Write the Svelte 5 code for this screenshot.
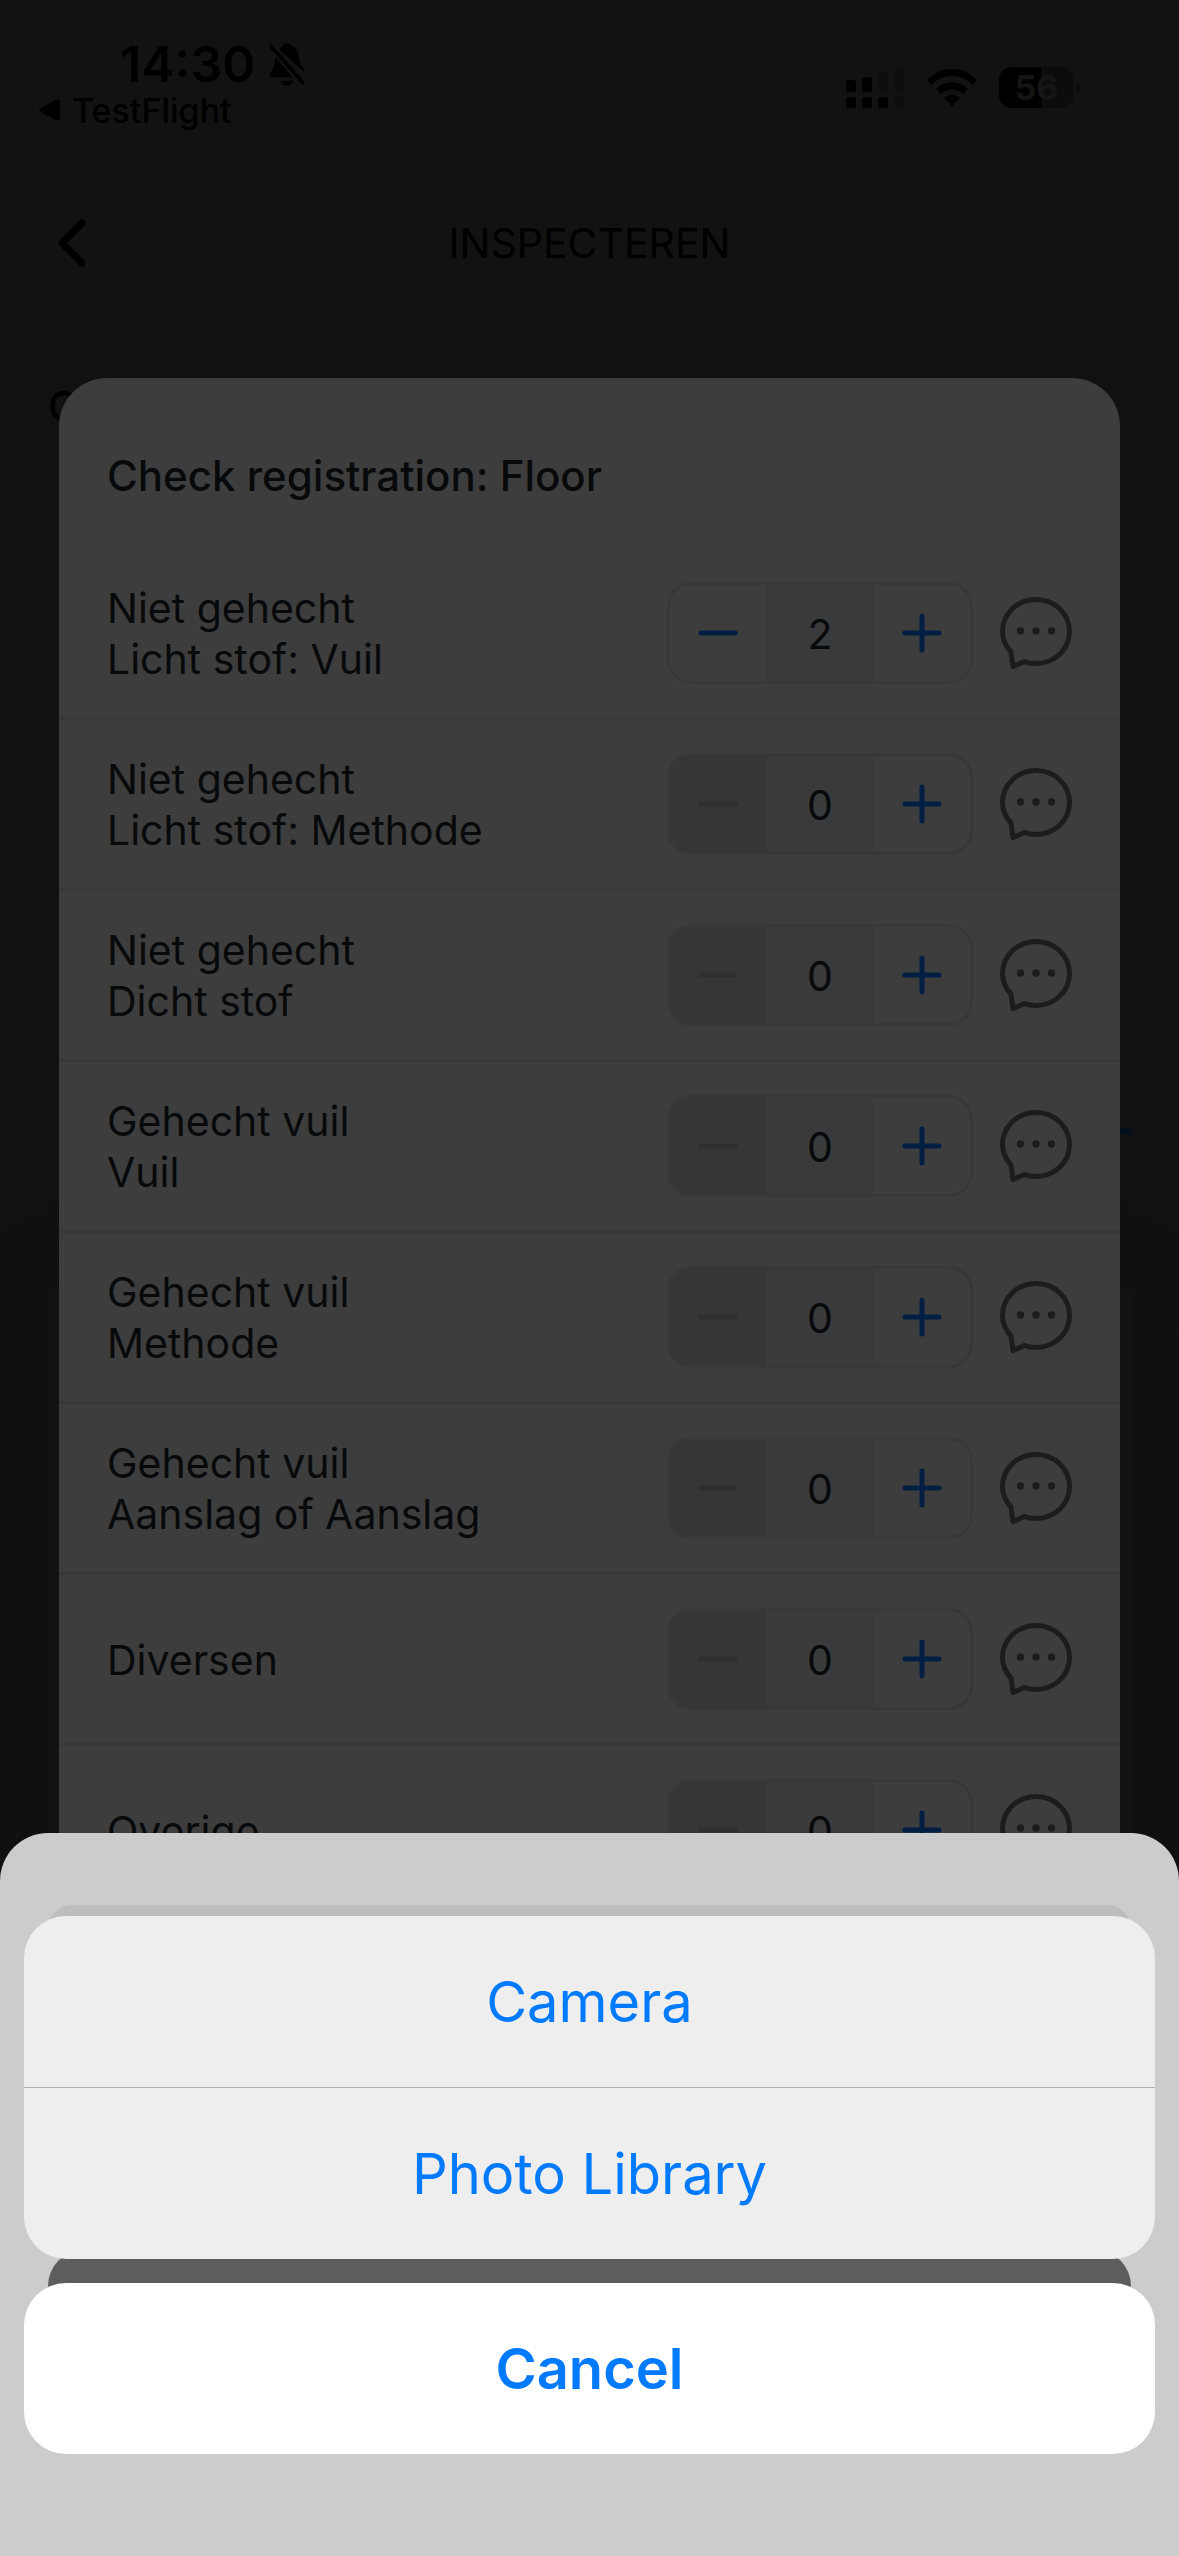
<script lang="ts">
  interface Check {
    lines: string[];
    count: number;
  }

  let checks: Check[] = $state([
    { lines: ['Niet gehecht', 'Licht stof: Vuil'], count: 2 },
    { lines: ['Niet gehecht', 'Licht stof: Methode'], count: 0 },
    { lines: ['Niet gehecht', 'Dicht stof'], count: 0 },
    { lines: ['Gehecht vuil', 'Vuil'], count: 0 },
    { lines: ['Gehecht vuil', 'Methode'], count: 0 },
    { lines: ['Gehecht vuil', 'Aanslag of Aanslag'], count: 0 },
    { lines: ['Diversen'], count: 0 },
    { lines: ['Overige'], count: 0 }
  ]);
</script>

<div class="screen">
  <header>
    <div class="status-bar">
      <div class="status-left">
        <div class="clock">
          <span>14:30</span>
          <svg class="bell" viewBox="0 0 40 50" aria-hidden="true">
            <path d="M11 7c2-2 3-3 4.500-4C17-1 23-1 25 3c7 3 9 9 9.500 18 .5 4 2 5 4 7.500 1 1.500 1.500 3 1.500 5z" />
            <path d="M7 16 26 39H4c-4 0-5-4-2-7 3-3 4-5 4-11z" />
            <path d="M13 43h14c-2 8-12 8-14 0z" />
            <path class="slash" d="M2 4 38 45" />
          </svg>
        </div>
        <a class="back-app" href="#testflight">
          <svg viewBox="0 0 21 22" aria-hidden="true"><path d="M2 9 17 1q4-2 4 2v16q0 4-4 2L2 13q-4-2 0-4z" /></svg>
          TestFlight
        </a>
      </div>
      <div class="status-right">
        <svg class="signal" viewBox="0 0 59 42" aria-hidden="true">
          <rect x="0" y="13" width="10" height="12" rx="3" />
          <rect x="16" y="10" width="10" height="15" rx="3" />
          <rect class="faint" x="32" y="5" width="10" height="20" rx="3" />
          <rect class="faint" x="48" y="0" width="10" height="25" rx="3" />
          <rect x="0" y="30" width="10" height="11" rx="3" />
          <rect x="16" y="30" width="10" height="11" rx="3" />
          <rect x="32" y="30" width="10" height="11" rx="3" />
          <rect class="faint" x="48" y="30" width="10" height="11" rx="3" />
        </svg>
        <svg class="wifi" viewBox="0 0 50 38" aria-hidden="true">
          <path d="M0 11C14-4 36-4 50 11l-4 5C34 4 16 4 4 16z" />
          <path d="M9 20c9-9 23-9 32 0l-5 5c-6-6-16-6-22 0z" />
          <path d="M17 29c5-4 11-4 16 0l-8 9z" />
        </svg>
        <div class="battery">
          <span class="level">56</span>
          <span class="cap"></span>
        </div>
      </div>
    </div>
    <nav>
      <button class="back" aria-label="Terug">
        <svg viewBox="0 0 28 48" aria-hidden="true"><path d="M24 4 4 24l20 20" /></svg>
      </button>
      <h1>INSPECTEREN</h1>
    </nav>
  </header>

  <main>
    <div class="backdrop">
      <span class="page-label">C</span>
      <div class="field"></div>
      <div class="field"></div>
      <div class="tab"></div>
      <div class="list"></div>
    </div>
    <section class="modal">
      <h2>Check registration: Floor</h2>
      {#each checks as check}
        <div class="check">
          <div class="check-name">
            {#each check.lines as line}
              <span>{line}</span>
            {/each}
          </div>
          <div class="stepper">
            <button aria-label="Minder" disabled={check.count === 0} onclick={() => check.count--}>
              <svg viewBox="0 0 40 40" aria-hidden="true"><path d="M3 20h34" /></svg>
            </button>
            <output>{check.count}</output>
            <button aria-label="Meer" onclick={() => check.count++}>
              <svg viewBox="0 0 40 40" aria-hidden="true"><path d="M3 20h34M20 3v34" /></svg>
            </button>
          </div>
          <button class="comment" aria-label="Opmerking">
            <svg viewBox="0 0 72 72" aria-hidden="true">
              <path d="M11 55C5.500 49 2.500 42 2.500 34.500 2.500 17 17 2.500 36 2.500s33.500 14.500 33.500 32S55 66.500 36 66.500c-4 0-8-.5-11.500-2L13 69.500z" />
              <circle cx="20.500" cy="34" r="3.700" />
              <circle cx="36" cy="34" r="3.700" />
              <circle cx="51.500" cy="34" r="3.700" />
            </svg>
          </button>
        </div>
      {/each}
    </section>
  </main>

  <div class="sheet">
    <div class="sheet-field"></div>
    <div class="sheet-submit"></div>
    <div class="actions">
      <div class="group">
        <button>Camera</button>
        <button>Photo Library</button>
      </div>
      <button class="cancel">Cancel</button>
    </div>
  </div>
</div>

<style>
  :global(body) {
    margin: 0;
    background: #111114;
  }

  .screen {
    position: relative;
    display: flex;
    flex-direction: column;
    height: 100vh;
    overflow: hidden;
    background: #111114;
    color: #08090a;
    font-family: Inter, 'Liberation Sans', sans-serif;
    font-size: 41px;
    line-height: 51px;
  }

  button {
    display: flex;
    align-items: center;
    justify-content: center;
    padding: 0;
    border: 0;
    background: none;
    color: inherit;
    font: inherit;
  }

  svg {
    display: block;
    flex: none;
  }

  /* Header */
  header {
    background: #121212;
    color: #000;
  }

  .status-bar {
    display: flex;
    justify-content: space-between;
    height: 178px;
    padding: 0 98px 0 39px;
    box-sizing: border-box;
  }

  .status-left {
    padding-top: 36px;
  }

  .clock {
    display: flex;
    align-items: center;
    gap: 12px;
    height: 57px;
    padding-left: 81px;
    font-size: 50px;
    font-weight: 600;
  }

  .bell {
    width: 40px;
    height: 44px;
  }

  .slash {
    fill: none;
    stroke: #000;
    stroke-width: 4;
    stroke-linecap: round;
  }

  .back-app {
    display: flex;
    align-items: center;
    gap: 12px;
    height: 34px;
    color: inherit;
    font-size: 34px;
    font-weight: 500;
    text-decoration: none;
  }

  .back-app svg {
    width: 21px;
    height: 22px;
  }

  .status-right {
    display: flex;
    align-items: flex-start;
    gap: 22px;
    padding-top: 67px;
  }

  .signal {
    width: 59px;
    height: 42px;
  }

  .faint {
    fill: #0e0e0e;
  }

  .wifi {
    width: 50px;
    height: 38px;
    padding-top: 2px;
  }

  .battery {
    display: flex;
    align-items: center;
    gap: 3px;
  }

  .level {
    width: 75px;
    border-radius: 13px;
    background: linear-gradient(90deg, #000 56%, #0c0c0c 56%);
    color: #151515;
    font-size: 34px;
    font-weight: 700;
    line-height: 41px;
    text-align: center;
  }

  .cap {
    width: 4px;
    height: 12px;
    border-radius: 0 4px 4px 0;
    background: #0c0c0c;
  }

  nav {
    display: grid;
    grid-template-columns: 1fr auto 1fr;
    align-items: center;
    height: 130px;
    padding: 0 58px;
  }

  .back {
    justify-self: start;
  }

  .back svg {
    width: 28px;
    height: 48px;
    fill: none;
    stroke: #000;
    stroke-width: 7;
    stroke-linecap: round;
    stroke-linejoin: round;
  }

  h1 {
    margin: 0;
    font-size: 41px;
    font-weight: 400;
  }

  /* Page behind the modal */
  main {
    position: relative;
    padding: 70px 59px 0;
  }

  .backdrop {
    position: absolute;
    top: 73px;
    right: 48px;
    left: 48px;
    display: flex;
    flex-direction: column;
  }

  .page-label {
    height: 108px;
    color: #000;
    font-weight: 500;
  }

  .field {
    height: 138px;
    margin-bottom: 54px;
    border-radius: 24px;
    background: #121212;
  }

  .tab {
    align-self: flex-end;
    width: 50%;
    height: 129px;
    margin: 126px 0 156px;
    border-bottom: 6px solid #000f1e;
  }

  .list {
    height: 900px;
    background: #121212;
    box-shadow: 0 0 60px #111;
  }

  /* Modal */
  .modal {
    position: relative;
    border-radius: 48px 48px 0 0;
    background: #3d3d3d;
  }

  h2 {
    margin: 0;
    padding: 72px 48px 48px;
    font-size: 42px;
    font-weight: 500;
  }

  .check {
    display: flex;
    align-items: center;
    height: 168px;
    padding: 0 48px;
    border-bottom: 3px solid #383838;
  }

  .check-name {
    display: flex;
    flex: 1;
    flex-direction: column;
    padding-top: 2px;
  }

  .stepper {
    display: grid;
    grid-template-columns: 96px 108px 96px;
    height: 96px;
    margin-right: 27px;
    overflow: hidden;
    border: 3px solid #383838;
    border-radius: 24px;
  }

  .stepper button svg {
    width: 40px;
    height: 40px;
    fill: none;
    stroke: #001f42;
    stroke-width: 5;
    stroke-linecap: round;
  }

  .stepper button:disabled {
    background: #363636;
  }

  .stepper button:disabled svg {
    stroke: #2f2f2f;
  }

  output {
    padding-top: 2px;
    background: #393a3c;
    line-height: 94px;
    text-align: center;
  }

  .comment svg {
    width: 72px;
    height: 72px;
    fill: #1c1c1c;
  }

  .comment path {
    fill: none;
    stroke: #1c1c1c;
    stroke-width: 5;
    stroke-linejoin: round;
  }

  /* Bottom sheet */
  .sheet {
    position: absolute;
    right: 0;
    bottom: 0;
    left: 0;
    display: flex;
    flex-direction: column;
    gap: 24px;
    padding: 72px 48px 174px;
    border-radius: 48px 48px 0 0;
    background: #ccc;
  }

  .sheet-field {
    height: 321px;
    border-radius: 24px;
    background: #bdbdbd;
  }

  .sheet-submit {
    height: 132px;
    border-radius: 36px;
    background: #5d5d5d;
  }

  .actions {
    position: absolute;
    right: 24px;
    bottom: 102px;
    left: 24px;
    display: flex;
    flex-direction: column;
    gap: 24px;
    color: #007aff;
    font-size: 56px;
  }

  .actions button {
    width: 100%;
    height: 171px;
    padding-top: 2px;
  }

  .group {
    overflow: hidden;
    border-radius: 42px;
    background: #eee;
  }

  .group button + button {
    height: 172px;
    border-top: 1px solid #b0b0b0;
  }

  .actions .cancel {
    border-radius: 42px;
    background: #fff;
    font-weight: 600;
  }
</style>
